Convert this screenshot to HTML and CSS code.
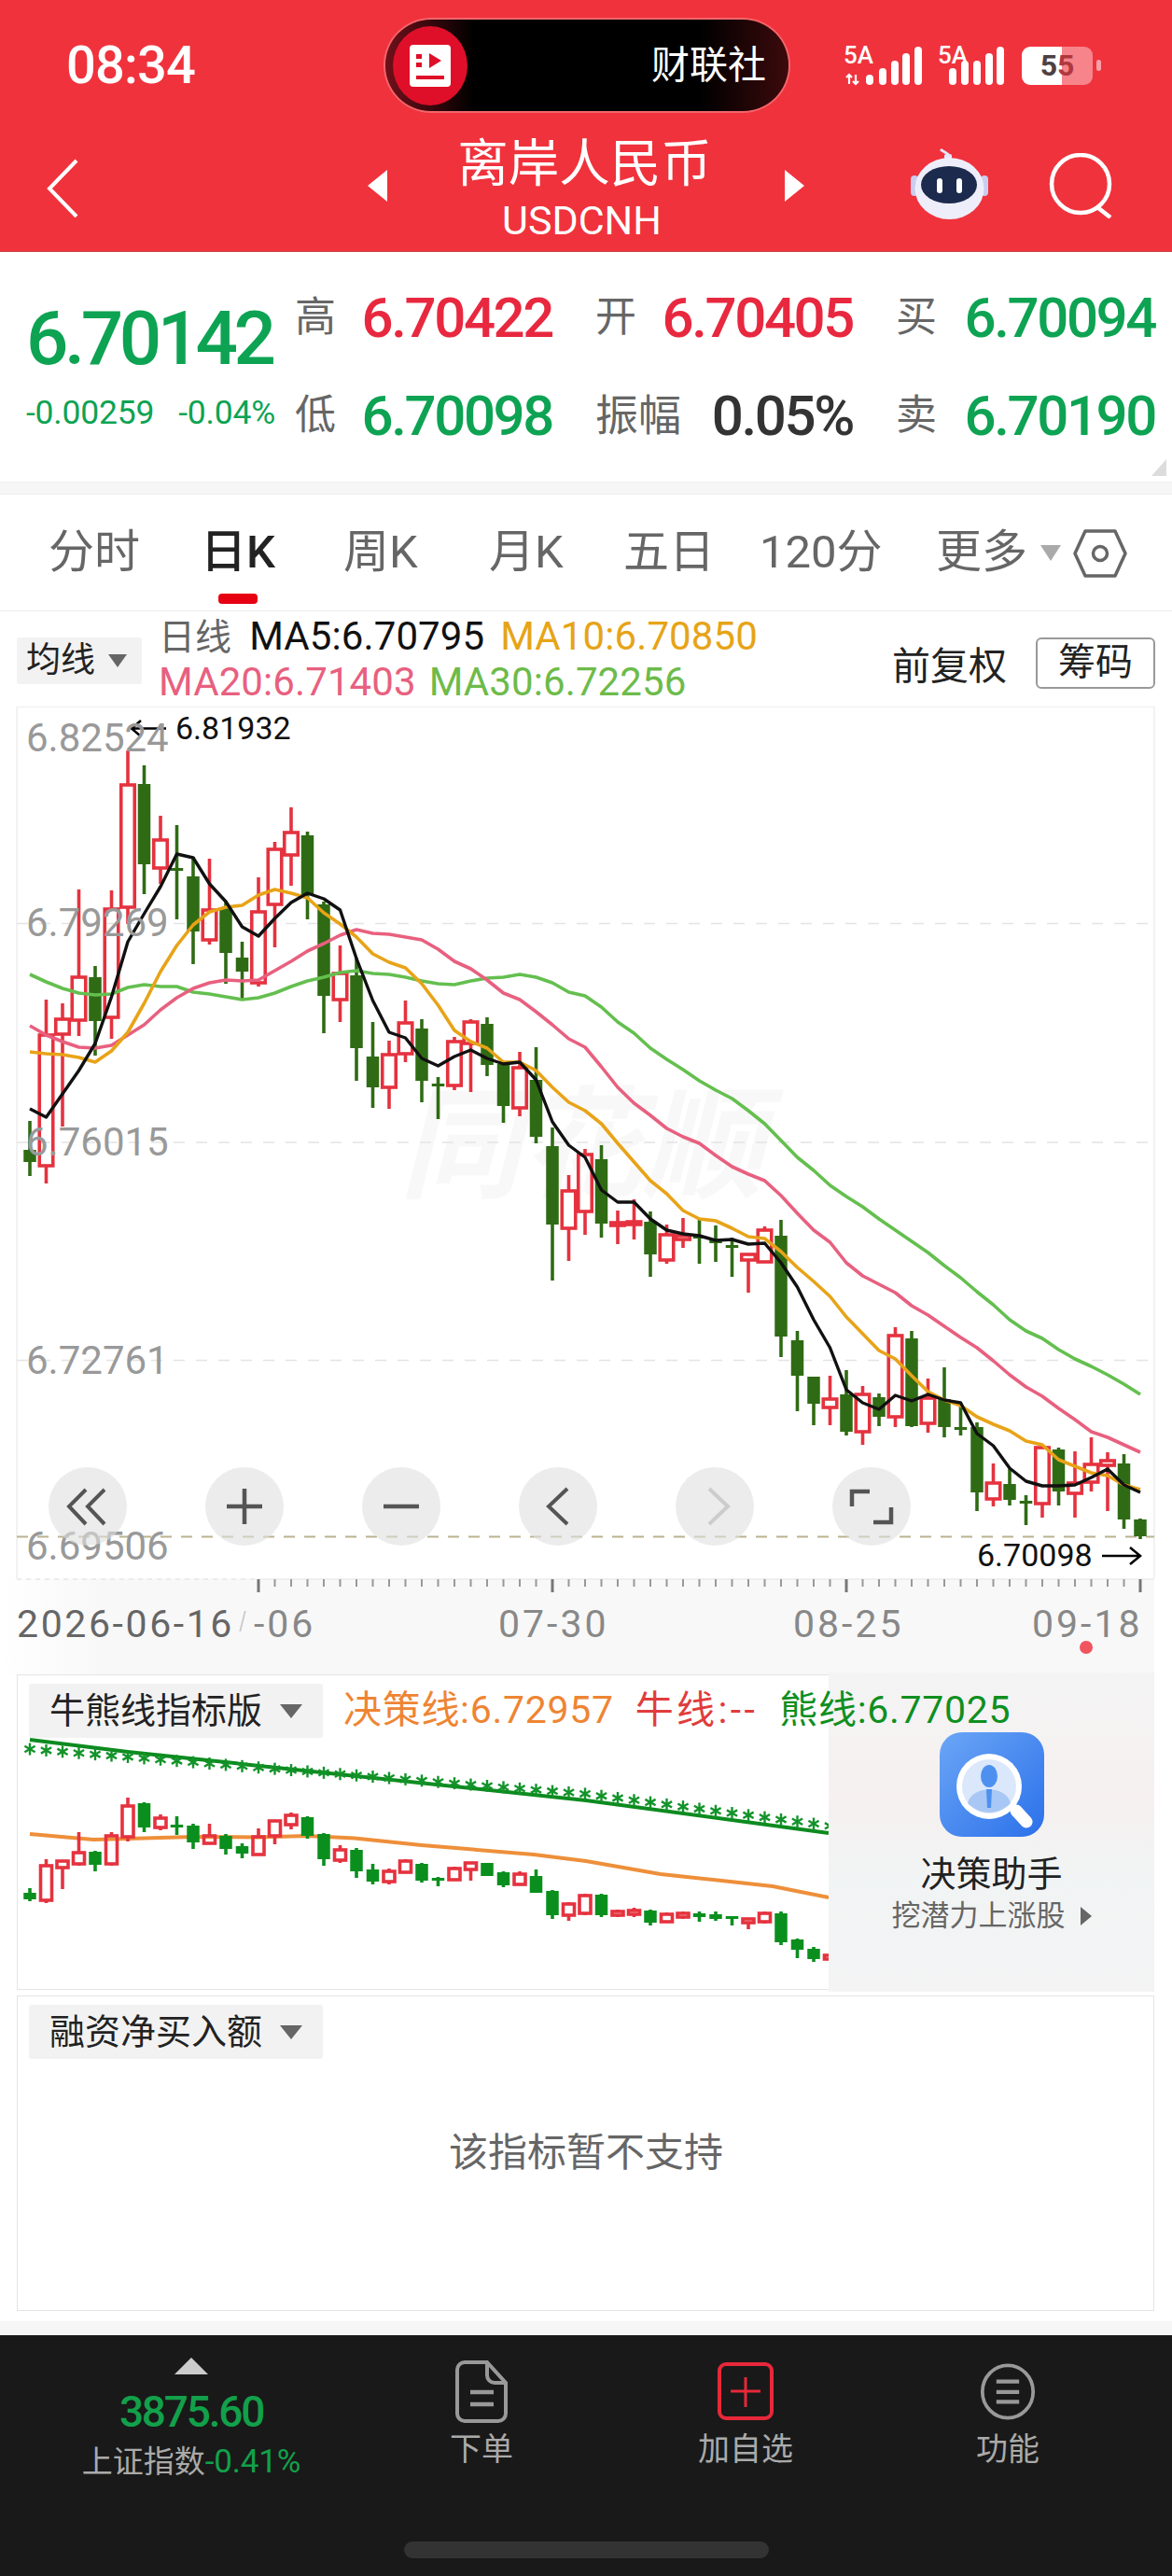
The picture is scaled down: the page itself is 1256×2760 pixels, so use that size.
FILE: index.html
```html
<!DOCTYPE html>
<html lang="zh-CN">
<head>
<meta charset="utf-8">
<title>离岸人民币 USDCNH</title>
<link rel="stylesheet" href="styles.css">
</head>
<body>
<div class="phone">
  <header class="top">
    <div class="status">
      <span class="time">08:34</span>
      <div class="capsule">
        <svg class="cap-icon" viewBox="0 0 80 85"><ellipse cx="40" cy="42.5" rx="40" ry="42.5" fill="#df0f29"/><rect x="18" y="20" width="44" height="45" rx="4" fill="#fff"/><path d="M39 29l13 8-13 8z" fill="#df0f29"/><rect x="25" y="30" width="6" height="5" fill="#df0f29"/><rect x="25" y="39" width="6" height="5" fill="#df0f29"/><rect x="25" y="53" width="30" height="4" fill="#df0f29"/></svg>
        <span class="cap-text">财联社</span>
      </div>
      <svg class="signals" viewBox="905 45 175 50">
        <text x="904" y="68" class="sig-text">5A</text>
        <path d="M910 80v10M907 83l3-3 3 3M917 80v10M914 87l3 3 3-3" fill="none" stroke="#fff" stroke-width="2.200"/>
        <g fill="#fff"><rect x="928" y="80" width="8" height="11" rx="4"/><rect x="942" y="73" width="8" height="18" rx="4"/><rect x="955" y="65" width="8" height="26" rx="4"/><rect x="967" y="57" width="8" height="34" rx="4"/><rect x="980" y="50" width="8" height="41" rx="4"/></g>
        <text x="1005" y="68" class="sig-text">5A</text>
        <g fill="#fff"><rect x="1017" y="73" width="8" height="18" rx="4"/><rect x="1030" y="65" width="8" height="26" rx="4"/><rect x="1043" y="65" width="8" height="26" rx="4"/><rect x="1056" y="57" width="8" height="34" rx="4"/><rect x="1068" y="50" width="8" height="41" rx="4"/></g>
      </svg>
      <div class="battery"><span class="b-a">5</span><span class="b-b">5</span></div>
      <i class="battery-nub"></i>
    </div>
    <div class="nav">
      <svg class="back" viewBox="0 0 34 63"><path d="M32 2L3 32l29 30" fill="none" stroke="#fff" stroke-width="4"/></svg>
      <i class="tri-left"></i>
      <div class="title-box">
        <div class="title">离岸人民币</div>
        <div class="subtitle">USDCNH</div>
      </div>
      <i class="tri-right"></i>
      <svg class="robot" viewBox="0 0 83 77"><path d="M40 12C43 6 36 6 32 2" fill="none" stroke="#e6e6fa" stroke-width="3"/><rect x="36" y="7" width="8" height="6" rx="2" fill="#e6e6fa"/><rect x="0" y="30" width="8" height="22" rx="4" fill="#c9cdf0"/><rect x="75" y="30" width="8" height="22" rx="4" fill="#c9cdf0"/><ellipse cx="41.500" cy="44" rx="37" ry="33" fill="#eeeefb"/><ellipse cx="41" cy="40" rx="30" ry="20" fill="#1c2a4d"/><rect x="28" y="33" width="6" height="16" rx="3" fill="#fff"/><rect x="49" y="33" width="6" height="16" rx="3" fill="#fff"/></svg>
      <svg class="search" viewBox="0 0 68 70"><ellipse cx="34" cy="33" rx="31" ry="31" fill="none" stroke="#fff" stroke-width="4.500"/><path d="M52 58l14 11" stroke="#fff" stroke-width="4.500"/></svg>
    </div>
  </header>

  <section class="quote">
    <div class="q-main">
      <div class="q-price">6.70142</div>
      <div class="q-change"><span>-0.00259</span><span>-0.04%</span></div>
    </div>
    <div class="q-grid">
      <div class="q-cell"><span class="q-label">高</span><span class="q-val red">6.70422</span></div>
      <div class="q-cell"><span class="q-label">开</span><span class="q-val red">6.70405</span></div>
      <div class="q-cell wide"><span class="q-label">买</span><span class="q-val green">6.70094</span></div>
      <div class="q-cell"><span class="q-label">低</span><span class="q-val green">6.70098</span></div>
      <div class="q-cell"><span class="q-label">振幅</span><span class="q-val dark">0.05%</span></div>
      <div class="q-cell wide"><span class="q-label">卖</span><span class="q-val green">6.70190</span></div>
    </div>
    <i class="q-corner"></i>
  </section>
  <div class="band"></div>

  <nav class="tabs">
    <span class="tab">分时</span>
    <span class="tab active">日K</span>
    <span class="tab">周K</span>
    <span class="tab">月K</span>
    <span class="tab">五日</span>
    <span class="tab">120分</span>
    <span class="tab more">更多<i class="tri-more"></i></span>
    <svg class="hex" viewBox="0 0 58 52"><path d="M13 2h32l11 24-11 24H13L2 26z" fill="none" stroke="#666" stroke-width="3.500" stroke-linejoin="round"/><circle cx="29" cy="26" r="7.500" fill="none" stroke="#666" stroke-width="3.500"/></svg>
  </nav>

  <section class="legend">
    <div class="drop small"><span>均线</span><i class="tri-down"></i></div>
    <div class="ma-text">
      <div><span class="ma-gray">日线</span><span class="ma-black">MA5:6.70795</span><span class="ma-orange">MA10:6.70850</span></div>
      <div><span class="ma-pink">MA20:6.71403</span><span class="ma-green">MA30:6.72256</span></div>
    </div>
    <span class="fq">前复权</span>
    <span class="chip">筹码</span>
  </section>

  <section class="chart">
    <div class="watermark">同花顺</div>
    <svg id="main-chart" class="canvas" viewBox="0 756 1256 934"></svg>
    <span class="px p1">6.82524</span>
    <span class="px p2">6.79269</span>
    <span class="px p3">6.76015</span>
    <span class="px p4">6.72761</span>
    <span class="px p5">6.69506</span>
    <span class="extreme e-high">6.81932</span>
    <span class="extreme e-low">6.70098</span>
    <div class="tools">
      <button class="tool"><svg viewBox="0 0 84 84"><path d="M40 24L22 42l18 19M60 24L42 42l18 19" fill="none" stroke="#555" stroke-width="4"/></svg></button>
      <button class="tool"><svg viewBox="0 0 84 84"><path d="M42 23v38M23 42h38" fill="none" stroke="#555" stroke-width="4.500"/></svg></button>
      <button class="tool"><svg viewBox="0 0 84 84"><path d="M23 42h38" fill="none" stroke="#555" stroke-width="4.500"/></svg></button>
      <button class="tool"><svg viewBox="0 0 84 84"><path d="M52 23L32 42l20 19" fill="none" stroke="#555" stroke-width="4"/></svg></button>
      <button class="tool"><svg viewBox="0 0 84 84"><path d="M36 23l20 19-20 19" fill="none" stroke="#ccc" stroke-width="4"/></svg></button>
      <button class="tool"><svg viewBox="0 0 84 84"><path d="M21 42V26h19M63 43v16H44" fill="none" stroke="#555" stroke-width="4.500"/></svg></button>
    </div>
  </section>

  <section class="axis">
    <svg id="axis-ticks" class="canvas" viewBox="0 1690 1256 30"></svg>
    <span class="date d-first">2026-06-16</span>
    <span class="date d-clip">-06</span>
    <span class="date d-a">07-30</span>
    <span class="date d-b">08-25</span>
    <span class="date d-c">09-18</span>
    <i class="dot"></i>
  </section>

  <section class="panel bull">
    <svg id="bull-chart" class="canvas" viewBox="0 1793 1256 338"></svg>
    <div class="panel-head">
      <div class="drop"><span>牛熊线指标版</span><i class="tri-down"></i></div>
      <span class="lg lg-o">决策线:6.72957</span>
      <span class="lg lg-r">牛线:--</span>
      <span class="lg lg-g">熊线:6.77025</span>
    </div>
    <aside class="promo">
      <svg class="promo-icon" viewBox="0 0 112 112">
        <defs><linearGradient id="promoBlue" x1="0" y1="0" x2="1" y2="1"><stop offset="0" stop-color="#6ba6f6"/><stop offset="1" stop-color="#2b70ea"/></linearGradient></defs>
        <rect width="112" height="112" rx="24" fill="url(#promoBlue)"/>
        <path d="M82 84l11 12" stroke="#fff" stroke-width="13" stroke-linecap="round"/>
        <circle cx="53" cy="58" r="35" fill="#fff"/>
        <circle cx="53" cy="58" r="29" fill="#dbe7fa"/>
        <path d="M30 76c3-11 13-14 23-15 10 1 20 4 23 15-6 6-14 10-23 10s-17-4-23-10z" fill="#a8c7f4"/>
        <path d="M50 61h6l-1 20h-4z" fill="#4d90f0"/>
        <ellipse cx="53" cy="47" rx="9" ry="12" fill="#4d90f0"/>
      </svg>
      <div class="promo-title">决策助手</div>
      <div class="promo-sub">挖潜力上涨股<i class="tri-promo"></i></div>
    </aside>
  </section>

  <section class="panel empty">
    <div class="panel-head">
      <div class="drop"><span>融资净买入额</span><i class="tri-down"></i></div>
    </div>
    <p class="unsupported">该指标暂不支持</p>
  </section>
  <div class="band-low"></div>

  <footer class="bar">
    <div class="bar-row">
      <div class="bar-item index">
        <i class="tri-up"></i>
        <div class="idx-num">3875.60</div>
        <div class="idx-sub">上证指数<span>-0.41%</span></div>
      </div>
      <div class="bar-item">
        <svg class="b-icon doc" viewBox="0 0 56 67"><path d="M10 2h24l20 22v33a8 8 0 0 1-8 8H10a8 8 0 0 1-8-8V10a8 8 0 0 1 8-8z" fill="none" stroke="#999" stroke-width="4"/><path d="M34 2v14a8 8 0 0 0 8 8h12" fill="none" stroke="#999" stroke-width="4"/><path d="M16 34h25M16 47h25" stroke="#999" stroke-width="4.500"/></svg>
        <span class="b-label">下单</span>
      </div>
      <div class="bar-item">
        <svg class="b-icon add" viewBox="0 0 60 67"><rect x="2" y="4" width="56" height="58" rx="7" fill="none" stroke="#e8283a" stroke-width="4"/><path d="M30 18v32M14 33h32" stroke="#e8283a" stroke-width="3"/></svg>
        <span class="b-label">加自选</span>
      </div>
      <div class="bar-item">
        <svg class="b-icon func" viewBox="0 0 64 67"><ellipse cx="32" cy="33.500" rx="29" ry="30" fill="none" stroke="#999" stroke-width="4"/><path d="M19 22h26M19 34h26M19 45h26" stroke="#999" stroke-width="4.500"/></svg>
        <span class="b-label">功能</span>
      </div>
    </div>
    <i class="home"></i>
  </footer>
</div>
<script src="script.js"></script>
</body>
</html>
```
FILE: styles.css
```css
* { box-sizing: border-box; }
html, body { margin: 0; padding: 0; background: #fff; }
body { width: 1256px; height: 2760px; overflow: hidden; font-family: Roboto, "Noto Sans CJK SC", sans-serif; color: #222; }
i { display: block; font-style: normal; }
.phone { display: flex; flex-direction: column; width: 1256px; height: 2760px; }

/* header */
.top { height: 270px; flex: none; background: #f0323c; color: #fff; border-bottom: 1px solid #c9454c; }
.status { height: 140px; display: flex; align-items: center; padding-left: 71px; }
.time { width: 137px; font-size: 56px; font-weight: 500; letter-spacing: -0.8px; line-height: 60px; }
.capsule { width: 432px; height: 98px; margin-left: 205px; border-radius: 49px; display: flex; align-items: center; padding: 0 24px 0 8px; justify-content: space-between; background: linear-gradient(90deg, #70101a 0, #000 22%, #000 78%, #3c0a0c 100%); box-shadow: 0 0 0 2px #f2666c; }
.cap-icon { width: 80px; height: 85px; }
.cap-text { font-size: 41px; line-height: 46px; color: #fff; }
.signals { width: 175px; height: 50px; margin-left: 60px; }
.sig-text { font-family: Roboto, sans-serif; font-size: 26px; font-weight: 500; fill: #fff; }
.battery { width: 76px; height: 41px; margin-left: 15px; border-radius: 9px; display: flex; justify-content: center; align-items: center; font-size: 32px; font-weight: 700; line-height: 41px; background: linear-gradient(90deg, #fff 0, #fff 43px, rgba(255,255,255,.4) 43px); }
.b-a { color: #4d4042; }
.b-b { color: #b0373f; }
.battery-nub { width: 5px; height: 12px; margin-left: 4px; border-radius: 3px; background: rgba(255,255,255,.55); }

.nav { height: 129px; display: flex; align-items: flex-start; padding-left: 50px; }
.back { width: 34px; height: 63px; margin-top: 30px; }
.tri-left { margin: 42px 0 0 310px; width: 0; height: 0; border-style: solid; border-width: 17px 21px 17px 0; border-color: transparent #fff transparent transparent; }
.tri-right { margin-top: 42px; width: 0; height: 0; border-style: solid; border-width: 17px 0 17px 21px; border-color: transparent transparent transparent #fff; }
.title-box { width: 426px; text-align: center; }
.title { font-size: 54.500px; line-height: 56px; margin-top: 7px; margin-right: 3px; }
.subtitle { font-size: 43px; line-height: 44px; margin: 11px 9px 0 0; letter-spacing: 0; }
.robot { width: 83px; height: 77px; margin: 18px 0 0 114px; }
.search { width: 68px; height: 70px; margin: 24px 0 0 65px; }

/* quote */
.quote { height: 246px; flex: none; display: flex; align-items: flex-start; position: relative; padding-left: 28px; }
.q-main { width: 289px; flex: none; }
.q-price { font-size: 80px; line-height: 78px; margin-top: 54px; font-weight: 500; letter-spacing: -4.500px; color: #0da353; }
.q-change { display: flex; justify-content: space-between; width: 267px; margin-top: 21px; font-size: 35.500px; line-height: 38px; color: #0da353; letter-spacing: -0.2px; }
.q-grid { display: grid; grid-template-columns: 275px 275px 277px; column-gap: 47px; row-gap: 0; margin-top: 18px; }
.q-cell { height: 105px; display: flex; justify-content: space-between; align-items: center; white-space: nowrap; }
.q-label { font-size: 44px; line-height: 60px; color: #666; margin-left: -1px; margin-top: -2px; }
.q-val { font-size: 60px; line-height: 64px; font-weight: 500; letter-spacing: -2.400px; }
.q-cell:nth-child(5) .q-label { font-size: 46px; }
.red { color: #e8283f; }
.green { color: #0da353; }
.dark { color: #333; }
.q-corner { position: absolute; right: 6px; bottom: 6px; width: 0; height: 0; border-style: solid; border-width: 0 0 18px 16px; border-color: transparent transparent #dcdcdc transparent; }
.band { height: 14px; flex: none; background: #f6f6f6; border-top: 1px solid #eee; border-bottom: 1px solid #eee; }

/* tabs */
.tabs { height: 125px; flex: none; display: grid; grid-template-columns: 163px 153px 156px 144px 146px 189px 146px 58px; align-items: start; padding: 34px 0 0 52px; border-bottom: 1px solid #ececec; position: relative; }
.tab { font-size: 49px; line-height: 56px; color: #666; white-space: nowrap; position: relative; display: flex; align-items: center; }
.tab.active { color: #222; font-weight: 500; }
.tab.active::after { content: ""; position: absolute; left: 19px; top: 72px; width: 42px; height: 11px; border-radius: 4px; background: #e60012; }
.tri-more { margin-left: 14px; width: 0; height: 0; border-style: solid; border-width: 17px 11px 0 11px; border-color: #aaa transparent transparent transparent; }
.hex { width: 58px; height: 52px; margin-top: 3px; margin-left: 1px; }

/* legend */
.legend { height: 102px; flex: none; display: flex; align-items: flex-start; padding-left: 18px; }
.drop { display: flex; align-items: center; justify-content: space-between; background: #f2f2f2; border-radius: 3px; width: 315px; height: 58px; padding: 0 22px; font-size: 38px; color: #222; white-space: nowrap; line-height: 50px; }
.drop.small { width: 134px; height: 50px; margin-top: 28px; padding: 0 16px 0 10px; font-size: 37px; }
.tri-down { width: 0; height: 0; border-style: solid; border-width: 15px 12px 0 12px; border-color: #666 transparent transparent transparent; }
.drop.small .tri-down { border-width: 14px 10px 0 10px; }
.ma-text { width: 786px; margin-left: 18px; font-size: 42px; line-height: 48px; margin-top: 3px; white-space: nowrap; letter-spacing: 0.1px; }
.ma-gray { color: #666; font-size: 39px; }
.ma-black { color: #111; margin-left: 19px; }
.ma-orange { color: #e6a417; margin-left: 17px; }
.ma-pink { color: #e8607f; }
.ma-green { color: #6dbb4a; margin-left: 14px; }
.fq { font-size: 41px; line-height: 50px; margin-top: 34px; }
.chip { width: 128px; height: 55px; margin: 28px 0 0 31px; border: 2px solid #999; border-radius: 6px; text-align: center; font-size: 40px; line-height: 50px; }

/* main chart */
.chart { height: 934px; flex: none; position: relative; overflow: hidden; }
.canvas { position: absolute; left: 0; top: 0; width: 1256px; height: 100%; }
.watermark { position: absolute; left: 428px; top: 392px; font-size: 130px; line-height: 160px; font-style: italic; font-weight: 700; color: #f8f8f8; white-space: nowrap; }
.px { position: absolute; left: 28px; font-size: 42px; line-height: 40px; color: #999; }
.p1 { top: 14px; }
.p2 { top: 212px; }
.p3 { top: 447px; }
.p4 { top: 681px; }
.p5 { top: 880px; }
.extreme { position: absolute; font-size: 34px; line-height: 34px; color: #111; }
.e-high { left: 188px; top: 6px; }
.e-low { left: 1047px; top: 892px; }
.tools { position: absolute; left: 52px; top: 815px; display: flex; gap: 84px; }
.tool { width: 84px; height: 84px; padding: 0; border: 0; border-radius: 50%; background: rgba(224,224,224,.6); }
.tool svg { display: block; width: 84px; height: 84px; }

/* axis */
.axis { height: 103px; flex: none; position: relative; background: linear-gradient(90deg, #fff 0, #f8f8f8 110px, #f8f8f8 1237px, #fff 1237px); }
.axis .canvas { height: 30px; }
.date { position: absolute; top: 29px; font-size: 41px; line-height: 40px; letter-spacing: 3px; color: #888; white-space: nowrap; }
.d-first { left: 18px; color: #666; letter-spacing: 2.600px; }
.d-clip { left: 272px; }
.d-clip::before { content: ""; position: absolute; left: -13px; top: 6px; width: 2px; height: 22px; background: #ccc; transform: skewX(-14deg); }
.d-a { left: 534px; }
.d-b { left: 850px; }
.d-c { left: 1106px; }
.dot { position: absolute; left: 1157px; top: 67px; width: 14px; height: 14px; border-radius: 50%; background: #f0555f; }

/* panels */
.panel { flex: none; position: relative; margin: 0 19px 0 18px; border: 1px solid #e4e4e4; background: #fff; }
.panel .canvas { left: -19px; top: -1px; height: 338px; width: 1256px; }
.bull { height: 338px; }
.empty { height: 338px; margin-top: 6px; }
.panel-head { position: relative; z-index: 2; display: flex; align-items: flex-start; padding: 9px 0 0 12px; white-space: nowrap; }
.lg { font-size: 41px; line-height: 50px; margin-top: 3px; letter-spacing: 0.7px; }
.lg-o { color: #ee8533; margin-left: 22px; }
.lg-r { color: #e03c3c; margin-left: 23px; letter-spacing: 3.400px; }
.lg-g { color: #0f8f1f; margin-left: 23px; }
.promo { position: absolute; z-index: 1; left: 869px; right: -1px; top: -3px; bottom: -3px; display: flex; flex-direction: column; align-items: center; padding-top: 64px; background: linear-gradient(180deg, #f4f4f4 0, #f6f0f0 40%, #f1f4f4 65%, #f4f4f5 100%); }
.promo-icon { width: 112px; height: 112px; flex: none; }
.promo-title { font-size: 38px; line-height: 42px; margin-top: 19px; color: #222; }
.promo-sub { display: flex; align-items: center; font-size: 31px; line-height: 36px; margin-top: 6px; color: #666; }
.tri-promo { margin-left: 16px; width: 0; height: 0; border-style: solid; border-width: 10px 0 10px 12px; border-color: transparent transparent transparent #666; }
.unsupported { position: absolute; left: 462px; top: 140px; margin: 0; font-size: 42px; line-height: 56px; color: #666; white-space: nowrap; }
.band-low { height: 26px; flex: none; background: linear-gradient(180deg, #fff 0, #fff 11px, #f6f6f6 11px); }

/* bottom bar */
.bar { height: 259px; flex: none; background: #191919; display: flex; flex-direction: column; align-items: center; }
.bar-row { width: 100%; display: grid; grid-template-columns: 410px 212px 354px 208px; }
.bar-item { display: flex; flex-direction: column; align-items: center; padding-top: 27px; }
.b-icon { width: 60px; height: 67px; flex: none; }
.b-label { font-size: 34px; line-height: 40px; margin-top: 8px; color: #aaa; }
.tri-up { margin-top: -3px; width: 0; height: 0; border-style: solid; border-width: 0 18px 18px 18px; border-color: transparent transparent #ccc transparent; }
.idx-num { font-size: 46px; line-height: 44px; margin-top: 18px; font-weight: 500; letter-spacing: -2.200px; color: #12a04a; }
.idx-sub { font-size: 33px; line-height: 36px; margin-top: 14px; color: #aaa; white-space: nowrap; }
.idx-sub span { color: #12a04a; font-size: 35px; letter-spacing: -0.2px; }
.home { width: 391px; height: 18px; margin-top: auto; margin-bottom: 20px; border-radius: 9px; background: #333; }
```
FILE: script.js
```js
// [wickTop, wickLow, bodyTop, bodyBottom, isRed] for each trading day, in page pixels.
var main = [
[1200,1259,1231,1244,0],[1070,1267,1108,1248,1],[1074,1206,1091,1107,1],[952,1109,1046,1092,1],[1034,1130,1046,1093,0],
[953,1112,973,1089,1],[803,989,840,971,1],[819,957,839,925,0],[873,946,899,929,1],[883,984,929,931,0],
[917,1032,938,997,0],[919,1011,974,1006,1],[964,1053,972,1020,0],[1008,1071,1025,1040,0],[939,1056,976,1052,1],
[901,1014,909,968,1],[864,948,891,915,1],[890,984,894,958,0],[965,1106,968,1066,0],[1012,1094,1042,1070,1],
[1025,1157,1044,1122,0],[1094,1186,1131,1164,0],[1114,1187,1129,1164,1],[1071,1137,1095,1128,1],[1091,1180,1101,1157,0],
[1153,1198,1160,1162,0],[1110,1167,1115,1162,1],[1091,1169,1094,1117,1],[1089,1152,1096,1140,0],[1139,1202,1139,1184,0],
[1126,1195,1143,1186,1],[1121,1224,1156,1217,0],[1207,1371,1227,1311,0],[1258,1350,1275,1315,1],[1230,1322,1236,1297,1],
[1226,1325,1241,1310,0],[1296,1332,1309,1312,1],[1284,1327,1308,1311,1],[1297,1367,1308,1343,0],[1311,1353,1322,1349,1],
[1304,1336,1323,1327,1],[1306,1353,1323,1325,0],[1312,1351,1328,1331,0],[1325,1367,1333,1335,0],[1342,1384,1343,1349,1],
[1313,1352,1317,1351,1],[1306,1453,1323,1431,0],[1425,1511,1435,1473,0],[1474,1526,1474,1503,0],[1473,1526,1498,1507,1],
[1467,1537,1493,1533,0],[1484,1547,1493,1533,1],[1492,1527,1496,1517,0],[1421,1528,1430,1517,1],[1425,1528,1433,1527,0],
[1476,1534,1497,1524,1],[1464,1539,1498,1528,0],[1503,1537,1528,1530,0],[1523,1618,1528,1598,0],[1567,1613,1588,1605,1],
[1573,1612,1589,1606,0],[1601,1633,1607,1609,0],[1548,1625,1550,1610,1],[1550,1612,1552,1597,0],[1554,1625,1588,1599,1],
[1539,1597,1568,1587,1],[1555,1618,1564,1569,1],[1557,1637,1567,1627,0],[1626,1648,1627,1645,0]];

var ma5 = [1187,1196,1171,1146,1117,1067,1008,978,949,914,918,946,965,992,1002,983,966,956,962,974,1026,1071,1105,1111,1133,1141,1131,1124,1133,1139,1137,1156,1201,1226,1239,1274,1287,1287,1305,1317,1321,1323,1328,1327,1332,1331,1352,1378,1413,1443,1488,1502,1509,1494,1500,1493,1499,1502,1535,1548,1572,1586,1591,1591,1590,1582,1573,1590,1598];
var ma10 = [1126,1128,1129,1132,1137,1125,1105,1074,1040,1012,990,976,971,969,958,952,956,961,977,989,1003,1021,1030,1036,1053,1076,1103,1115,1122,1137,1137,1146,1164,1180,1189,1203,1224,1244,1264,1278,1296,1305,1307,1315,1324,1326,1340,1357,1372,1388,1410,1428,1446,1455,1473,1490,1499,1505,1517,1525,1532,1543,1547,1563,1570,1577,1580,1590,1595];
var ma20 = [1098,1108,1115,1121,1122,1119,1108,1097,1081,1068,1058,1052,1049,1050,1049,1039,1029,1018,1010,1001,995,999,1000,1003,1006,1016,1029,1037,1049,1063,1070,1083,1097,1112,1121,1142,1164,1181,1194,1208,1217,1224,1237,1249,1257,1264,1280,1299,1317,1330,1352,1366,1375,1384,1398,1408,1420,1432,1443,1457,1472,1485,1495,1508,1520,1533,1539,1547,1555];
var ma30 = [1043,1051,1058,1063,1065,1064,1057,1054,1056,1056,1062,1064,1067,1070,1068,1063,1056,1050,1046,1041,1039,1042,1043,1046,1050,1053,1054,1050,1047,1046,1043,1046,1052,1062,1066,1078,1094,1106,1122,1134,1145,1157,1167,1176,1189,1203,1221,1239,1253,1269,1281,1292,1305,1317,1329,1341,1355,1368,1383,1397,1413,1425,1433,1445,1455,1463,1472,1482,1493];

var bull = [
[2022,2036,2027,2034,0],[1991,2038,1998,2035,1],[1992,2023,1993,2000,1],[1962,1998,1984,1996,1],[1982,2004,1983,1997,0],
[1962,1998,1966,1996,1],[1925,1972,1934,1967,1],[1930,1962,1931,1957,0],[1943,1960,1947,1957,1],[1945,1965,1954,1957,0],
[1953,1980,1955,1973,0],[1953,1975,1966,1974,1],[1964,1986,1966,1980,0],[1974,1990,1977,1985,0],[1958,1987,1967,1986,1],
[1949,1975,1950,1966,1],[1941,1959,1944,1954,1],[1945,1969,1946,1966,0],[1963,1998,1964,1991,0],[1976,1995,1981,1992,1],
[1979,2011,1981,2004,0],[1996,2018,2002,2015,0],[2001,2018,2004,2015,1],[1991,2006,1993,2005,1],[1995,2016,1996,2014,0],
[2010,2020,2011,2013,0],[1999,2014,2001,2013,1],[1995,2014,1995,2002,1],[1995,2009,1995,2009,0],[2004,2021,2005,2019,0],
[2004,2019,2007,2018,1],[2002,2027,2009,2027,0],[2024,2055,2025,2051,0],[2037,2057,2039,2051,1],[2028,2051,2030,2049,1],
[2028,2053,2029,2051,0],[2045,2053,2047,2051,1],[2043,2053,2046,2050,1],[2045,2062,2046,2059,0],[2048,2059,2050,2058,1],
[2047,2055,2049,2053,1],[2047,2058,2049,2053,0],[2047,2057,2050,2055,0],[2052,2062,2052,2055,0],[2054,2066,2055,2059,1],
[2047,2060,2049,2058,1],[2047,2083,2049,2080,0],[2076,2097,2077,2088,0],[2085,2101,2087,2098,0],[2092,2100,2094,2098,1]];

function xAt(i) { return 32 + 17.5 * i; }

function line(x1, y1, x2, y2, color, w, extra) {
  return '<line x1="' + x1 + '" y1="' + y1 + '" x2="' + x2 + '" y2="' + y2 + '" stroke="' + color + '" stroke-width="' + w + '"' + (extra || '') + '/>';
}

function candles(data, red, green, redW, greenW) {
  return data.map(function (c, i) {
    var x = xAt(i), s = '';
    if (c[4]) {
      s += line(x, c[0], x, c[2], red, 3.6) + line(x, c[3], x, c[1], red, 3.6);
      s += '<rect x="' + (x - redW / 2) + '" y="' + c[2] + '" width="' + redW + '" height="' + Math.max(c[3] - c[2], 3) + '" fill="#fff" fill-opacity="0" stroke="' + red + '" stroke-width="3.600"/>';
    } else {
      s += line(x, c[0], x, c[1], green, 3.6);
      s += '<rect x="' + (x - greenW / 2) + '" y="' + c[2] + '" width="' + greenW + '" height="' + Math.max(c[3] - c[2], 3) + '" fill="' + green + '"/>';
    }
    return s;
  }).join('');
}

function poly(values, color, w) {
  var pts = values.map(function (y, i) { return xAt(i) + ',' + y; }).join(' ');
  return '<polyline points="' + pts + '" fill="none" stroke="' + color + '" stroke-width="' + w + '" stroke-linejoin="round"/>';
}

function star(x, y, color) {
  var r = 6.5, d = 5.6, h = 3.2;
  return line(x, y - r, x, y + r, color, 2.4) + line(x - d, y - h, x + d, y + h, color, 2.4) + line(x - d, y + h, x + d, y - h, color, 2.4);
}

// main chart
var s = '';
s += line(18, 756, 18, 1690, '#eee', 1.5) + line(1237, 756, 1237, 1690, '#eee', 1.5) + line(18, 756.500, 1237, 756.500, '#eee', 1);
[988.500, 1223, 1456.500].forEach(function (y) {
  s += line(18, y, 1237, y, '#e4e4e4', 1.5, ' stroke-dasharray="12 12"');
});
s += line(18, 1645.500, 1237, 1645.500, '#b9b38f', 2, ' stroke-dasharray="12 10"');
s += candles(main, '#e5323f', '#2f6b14', 14.500, 13.500);
s += poly(ma30, '#64bf4f', 3.6) + poly(ma20, '#e8607f', 3.6) + poly(ma10, '#e8a317', 3.6) + poly(ma5, '#111', 3.4);
s += '<path d="M178 779.500H140M151 771l-10 8.500 10 8.500" fill="none" stroke="#000" stroke-width="2.500"/>';
s += '<path d="M1181 1666h41M1211 1657l11 9-11 9" fill="none" stroke="#000" stroke-width="2.500"/>';
document.getElementById('main-chart').innerHTML = s;

// axis ticks
var t = line(18, 1691, 277, 1691, '#e6e6e6', 1.5, ' stroke-dasharray="5 5"') + line(277, 1691, 1237, 1691, '#eee', 1.5);
for (var i = 14; i <= 68; i++) {
  var big = (i - 14) % 18 === 0;
  t += line(xAt(i), 1691, xAt(i), big ? 1705 : 1699, big ? '#777' : '#999', big ? 3 : 2);
}
document.getElementById('axis-ticks').innerHTML = t;

// 牛熊线 panel
var b = '';
b += '<polyline points="32,1863 137,1876 628,1928 888,1963" fill="none" stroke="#0d8b1f" stroke-width="4"/>';
for (var k = 0; k < 50; k++) {
  var x = xAt(k);
  var y = x < 628 ? 1873 + (x - 32) * 48 / 596 : 1921 + (x - 628) * 34 / 259;
  b += star(x, y, '#13932a');
}
b += '<polyline points="32,1964 100,1970 137,1969 207,1967 277,1967.500 329,1966 380,1968.600 452,1976 572,1986 628,1993 708,2007 828,2020 888,2032" fill="none" stroke="#ee8f3a" stroke-width="4"/>';
b += candles(bull, '#e5323f', '#0a8f1e', 12, 13.500);
document.getElementById('bull-chart').innerHTML = b;
```
